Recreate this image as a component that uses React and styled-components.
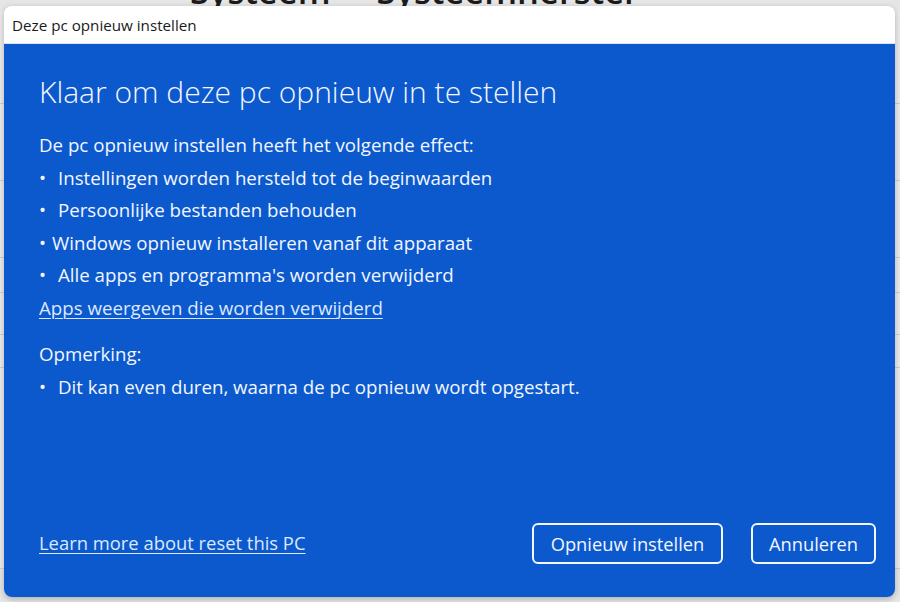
import React from "react";
import styled, { createGlobalStyle } from "styled-components";

const GlobalStyle = createGlobalStyle`
  html, body { margin: 0; padding: 0; }
  body {
    background: #e6e6e6;
    overflow: hidden;
    font-family: "Open Sans", "Noto Sans", sans-serif;
  }
`;

const Page = styled.div`
  position: relative;
  width: 900px;
  height: 602px;
  overflow: hidden;
  background: #e6e6e6;
`;

const Crumb = styled.div`
  display: flex;
  gap: 46px;
  padding-left: 190px;
  margin-top: -29px;
  height: 40px;
  font-size: 34.5px;
  font-weight: 600;
  line-height: 40px;
  color: #1b1b1b;
  font-family: "Open Sans", sans-serif;
  white-space: nowrap;
`;

const Rows = styled.div`
  display: flex;
  flex-direction: column;
`;

const Row = styled.div`
  height: ${(p) => p.$h}px;
  border-bottom: 1px solid #cfcfcf;
  background: #ebebeb;
`;

const Dialog = styled.div`
  position: absolute;
  left: 4px;
  top: 6px;
  width: 891px;
  height: 591px;
  border-radius: 8px;
  overflow: hidden;
  display: flex;
  flex-direction: column;
  box-shadow: 0 2px 6px rgba(0, 0, 0, 0.25);
`;

const TitleBar = styled.div`
  height: 37px;
  background: #ffffff;
  display: flex;
  align-items: center;
  padding-left: 8px;
  font-size: 15.2px;
  color: #1a1a1a;
  border-bottom: 1px solid #d8e4f4;
`;

const Body = styled.div`
  flex: 1;
  background: #0b59cd;
  color: #f2f6ff;
  display: flex;
  flex-direction: column;
  padding: 28px 19px 33px 35px;
`;

const Heading = styled.h1`
  margin: 0 0 17px;
  font-size: 30px;
  font-weight: 300;
  line-height: 40px;
  color: #f4f7ff;
  white-space: nowrap;
`;

const Line = styled.div`
  font-size: 18.7px;
  line-height: 32.5px;
  white-space: nowrap;
  margin-top: ${(p) => p.$mt || 0}px;
`;

const Bullet = styled.span`
  display: inline-block;
  width: ${(p) => p.$w}px;
`;

const Link = styled.a`
  color: #dce8ff;
  text-decoration: underline;
  text-underline-offset: 3px;
  text-decoration-thickness: 1px;
  font-size: ${(p) => p.$size || 18.7}px;
  line-height: 32.5px;
  white-space: nowrap;
  cursor: pointer;
`;

const Spacer = styled.div`
  flex: 1;
`;

const Footer = styled.div`
  display: flex;
  align-items: center;
`;

const Buttons = styled.div`
  margin-left: auto;
  display: flex;
  gap: 28px;
`;

const Button = styled.button`
  height: 41px;
  width: ${(p) => p.$w}px;
  border: 2px solid #f2f6ff;
  border-radius: 6px;
  background: #0b59cd;
  color: #f2f6ff;
  font-family: "Open Sans", sans-serif;
  font-size: 18.3px;
  padding: 0;
  cursor: pointer;
`;

const bullets = [
  ["Instellingen worden hersteld tot de beginwaarden", 19],
  ["Persoonlijke bestanden behouden", 19],
  ["Windows opnieuw installeren vanaf dit apparaat", 13],
  ["Alle apps en programma's worden verwijderd", 19],
];

export default function App() {
  return (
    <Page>
      <GlobalStyle />
      <Crumb>
        <span>Systeem</span>
        <span>Systeemherstel</span>
      </Crumb>
      <Rows>
        <Row $h={92} />
        <Row $h={76} />
        <Row $h={76} />
        <Row $h={34} />
        <Row $h={41} />
        <Row $h={32} />
        <Row $h={200} />
      </Rows>
      <Dialog>
        <TitleBar>Deze pc opnieuw instellen</TitleBar>
        <Body>
          <Heading>Klaar om deze pc opnieuw in te stellen</Heading>
          <Line>De pc opnieuw instellen heeft het volgende effect:</Line>
          {bullets.map(([t, w]) => (
            <Line key={t}>
              <Bullet $w={w}>•</Bullet>
              {t}
            </Line>
          ))}
          <Line>
            <Link>Apps weergeven die worden verwijderd</Link>
          </Line>
          <Line $mt={14}>Opmerking:</Line>
          <Line>
            <Bullet $w={19}>•</Bullet>
            Dit kan even duren, waarna de pc opnieuw wordt opgestart.
          </Line>
          <Spacer />
          <Footer>
            <Link $size={18.4}>Learn more about reset this PC</Link>
            <Buttons>
              <Button $w={191}>Opnieuw instellen</Button>
              <Button $w={125}>Annuleren</Button>
            </Buttons>
          </Footer>
        </Body>
      </Dialog>
    </Page>
  );
}
